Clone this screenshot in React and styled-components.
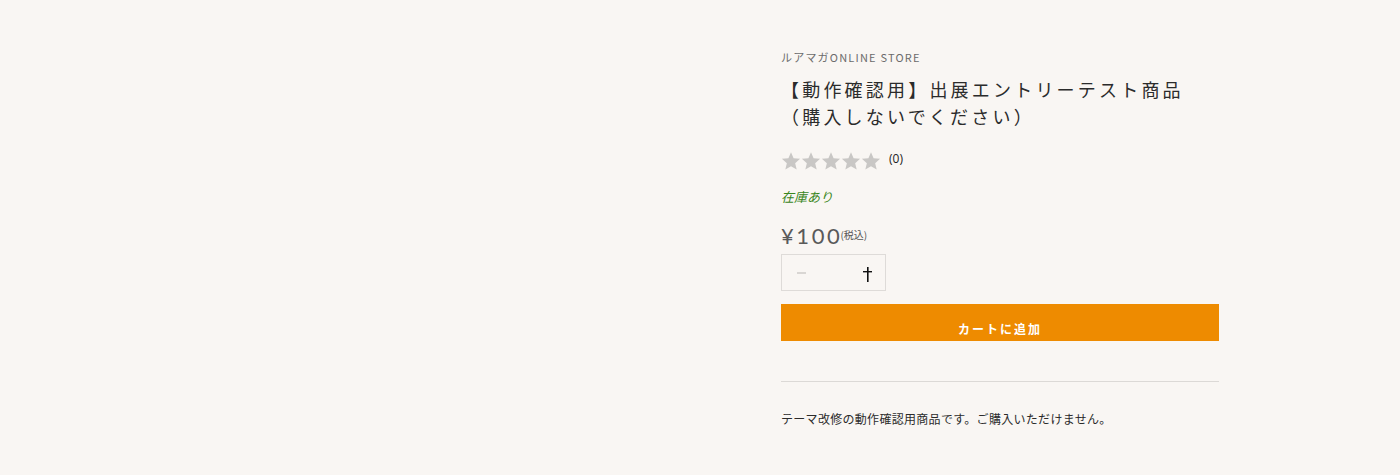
import React from 'react';
import styled, { createGlobalStyle } from 'styled-components';

const GlobalStyle = createGlobalStyle`
  html, body {
    margin: 0;
    padding: 0;
    background: #f9f6f3;
  }
  body {
    font-family: 'Noto Sans CJK JP', 'Noto Sans', sans-serif;
    color: #333;
  }
`;

const Page = styled.main`
  display: grid;
  grid-template-columns: 781px 438px;
  height: 475px;
  box-sizing: border-box;
  padding-top: 49px;
`;

const Gallery = styled.div``;

const Info = styled.section`
  display: flex;
  flex-direction: column;
  align-items: flex-start;
`;

const Vendor = styled.p`
  margin: 0;
  font-size: 11px;
  line-height: 16px;
  letter-spacing: 1.2px;
  color: #6b6b6b;
`;

const Title = styled.h1`
  margin: 11px 0 0;
  font-size: 18px;
  font-weight: 400;
  line-height: 27px;
  letter-spacing: 3.2px;
  color: #2b2b2b;
`;

const Rating = styled.div`
  display: flex;
  align-items: flex-start;
  gap: 8px;
  margin-top: 21px;
`;

const Stars = styled.div`
  display: flex;
`;

const Count = styled.span`
  font-family: 'Open Sans', sans-serif;
  font-size: 12px;
  line-height: 16px;
  color: #222;
`;

const Stock = styled.p`
  margin: 17px 0 0;
  font-size: 13px;
  line-height: 18px;
  font-style: italic;
  color: #3a861c;
`;

const PriceRow = styled.div`
  display: flex;
  align-items: flex-start;
  margin-top: 17px;
`;

const Price = styled.span`
  font-family: 'Lato', 'Noto Sans', sans-serif;
  font-size: 22px;
  font-weight: 400;
  line-height: 26px;
  letter-spacing: 2.6px;
  color: #5a5a5a;
`;

const Tax = styled.span`
  font-size: 10px;
  line-height: 14px;
  color: #555;
  margin: 5px 0 0 -2px;
`;

const Qty = styled.div`
  display: flex;
  align-items: center;
  justify-content: space-between;
  box-sizing: border-box;
  width: 105px;
  height: 37px;
  margin-top: 5px;
  padding: 0 13px 0 14px;
  border: 1px solid #dedbd8;
`;

const QtyButton = styled.span`
  display: flex;
  align-items: center;
  justify-content: center;
  width: 10px;
  height: 16px;
  margin-top: ${(p) => p.$offset || 0}px;
`;

const CartButton = styled.button`
  display: flex;
  align-items: flex-end;
  justify-content: center;
  width: 438px;
  height: 37px;
  margin-top: 13px;
  padding: 0 0 4px;
  border: 0;
  background: #ee8b00;
  color: #fff;
  font-family: 'Noto Sans CJK JP', sans-serif;
  font-size: 12px;
  font-weight: 700;
  letter-spacing: 2px;
  line-height: 16px;
`;

const Divider = styled.hr`
  width: 438px;
  margin: 40px 0 0;
  border: 0;
  border-top: 1px solid #dcd9d6;
`;

const Description = styled.p`
  margin: 28px 0 0;
  font-size: 12px;
  line-height: 18px;
  letter-spacing: 0.3px;
  color: #2b2b2b;
`;

const Star = () => (
  <svg width="20" height="20" viewBox="0 0 24 24">
    <path
      d="M12 1.5l3.1 7.2 7.8.7-5.9 5.2 1.8 7.7L12 18.2l-6.8 4.1 1.8-7.7L1.1 9.4l7.8-.7z"
      fill="#c9c7c5"
    />
  </svg>
);

const Minus = () => (
  <svg width="9" height="2" viewBox="0 0 9 2">
    <rect width="9" height="1" y="0.5" fill="#b9b6b3" />
  </svg>
);

const Plus = () => (
  <svg width="9" height="15" viewBox="0 0 9 15">
    <rect x="4" y="0" width="1.6" height="15" fill="#111" />
    <rect x="0" y="4" width="9" height="1.4" fill="#111" />
  </svg>
);

export default function App() {
  return (
    <>
      <GlobalStyle />
      <Page>
        <Gallery />
        <Info>
          <Vendor>ルアマガONLINE STORE</Vendor>
          <Title>
            【動作確認用】出展エントリーテスト商品
            <br />
            （購入しないでください）
          </Title>
          <Rating>
            <Stars>
              {[0, 1, 2, 3, 4].map((i) => (
                <Star key={i} />
              ))}
            </Stars>
            <Count>(0)</Count>
          </Rating>
          <Stock>在庫あり</Stock>
          <PriceRow>
            <Price>¥100</Price>
            <Tax>(税込)</Tax>
          </PriceRow>
          <Qty>
            <QtyButton><Minus /></QtyButton>
            <QtyButton $offset={4}><Plus /></QtyButton>
          </Qty>
          <CartButton>カートに追加</CartButton>
          <Divider />
          <Description>テーマ改修の動作確認用商品です。ご購入いただけません。</Description>
        </Info>
      </Page>
    </>
  );
}
